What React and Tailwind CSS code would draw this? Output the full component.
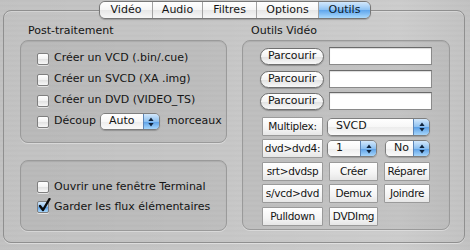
import React from "react";

const metal =
  "bg-[repeating-linear-gradient(0deg,#c2c2c2_0px,#c9c9c9_1px,#c4c4c4_2px,#c8c8c8_3px,#c0c0c0_4px,#c6c6c6_5px)]";

const tabs = [
  { label: "Vidéo", w: "w-[52px]" },
  { label: "Audio", w: "w-[50px]" },
  { label: "Filtres", w: "w-[54px]" },
  { label: "Options", w: "w-[62px]" },
  { label: "Outils", w: "w-[52px]", active: true },
];

const Arrows = () => (
  <svg width="6" height="10" viewBox="0 0 6 10">
    <path d="M3 0.5 L5.6 4 L0.4 4 Z" fill="#10243d" />
    <path d="M3 9.5 L5.6 6 L0.4 6 Z" fill="#10243d" />
  </svg>
);

const Checkbox = ({ checked }) => (
  <div
    className={`relative w-[12px] h-[12px] shrink-0 rounded-[2px] border border-[#7f7f7f] shadow-[0_1px_0_rgba(255,255,255,0.6)] ${
      checked
        ? "bg-[linear-gradient(#d3e8fc,#8dc0f0_50%,#5a9fe6_51%,#a7d6fb)]"
        : "bg-[linear-gradient(#ffffff,#f2f2f2_50%,#e2e2e2_51%,#f7f7f7)]"
    }`}
  >
    {checked && (
      <svg
        className="absolute -top-[4px] left-[0px]"
        width="13"
        height="14"
        viewBox="0 0 13 14"
      >
        <path
          d="M2 8 L5 12 L11.5 1"
          stroke="#0b0b0b"
          strokeWidth="2.4"
          fill="none"
          strokeLinecap="round"
          strokeLinejoin="round"
        />
      </svg>
    )}
  </div>
);

const CheckRow = ({ label, checked, children }) => (
  <div className="flex items-center h-[21px]">
    <Checkbox checked={checked} />
    <span className="ml-[5px] whitespace-nowrap">{label}</span>
    {children}
  </div>
);

const Popup = ({ label, className }) => (
  <div
    className={`flex h-[17px] rounded-[5px] border border-[#7e7e7e] overflow-hidden shadow-[0_1px_1px_rgba(0,0,0,0.2)] ${className}`}
  >
    <div className="flex-1 flex items-center pl-[8px] bg-[linear-gradient(#ffffff,#f7f7f7_50%,#ececec_51%,#fafafa)] whitespace-nowrap">
      {label}
    </div>
    <div className="w-[16px] flex items-center justify-center border-l border-[#5d86b8] bg-[linear-gradient(#d3e8fc,#8dc0f0_50%,#5a9fe6_51%,#a7d6fb)]">
      <Arrows />
    </div>
  </div>
);

const Pill = ({ label }) => (
  <div className="w-[64px] h-[17px] flex items-center justify-center rounded-full border border-[#6f6f6f] bg-[linear-gradient(#ffffff,#f3f3f3_50%,#e1e1e1_51%,#f8f8f8)] shadow-[0_1px_1px_rgba(0,0,0,0.25)] tracking-[-0.1px]">
    {label}
  </div>
);

const Field = () => (
  <div className="w-[103px] h-[18px] bg-white border border-[#8a8a8a] border-t-[#6a6a6a] shadow-[inset_0_1px_1px_rgba(0,0,0,0.15)]" />
);

const Btn = ({ label, className }) => (
  <div
    className={`h-[19px] flex items-center justify-center border border-[#9a9a9a] rounded-[1px] bg-[linear-gradient(#ffffff,#f4f4f4_60%,#e6e6e6)] whitespace-nowrap text-[10.5px] tracking-[-0.3px] ${className}`}
  >
    {label}
  </div>
);

const Group = ({ className, children }) => (
  <div
    className={`rounded-[8px] border border-[#9a9a9a] bg-[rgba(0,0,0,0.045)] shadow-[inset_0_1px_1px_rgba(0,0,0,0.08),0_1px_0_rgba(255,255,255,0.35)] ${className}`}
  >
    {children}
  </div>
);

export default function App() {
  return (
    <div
      className={`w-[470px] h-[250px] overflow-hidden text-[11px] text-[#141414] ${metal}`}
      style={{ fontFamily: '"DejaVu Sans", sans-serif' }}
    >
      <div className="w-[470px] h-[250px] bg-[linear-gradient(90deg,rgba(0,0,0,0.02),rgba(255,255,255,0)_40%,rgba(255,255,255,0.12)_85%,rgba(0,0,0,0.02))]">
        {/* tab bar */}
        <div className="relative z-10 flex justify-center pt-[1px]">
          <div className="flex h-[18px] rounded-[6px] border border-[#777] overflow-hidden shadow-[0_1px_1px_rgba(0,0,0,0.2)]">
            {tabs.map((t, i) => (
              <div
                key={t.label}
                className={`${t.w} flex items-center justify-center ${
                  i > 0 ? "border-l border-[#a2a2a2]" : ""
                } ${
                  t.active
                    ? "bg-[linear-gradient(#d3e8fc,#8ec2f3_50%,#5ea5ec_51%,#aad9fc)] text-[#0d1a2b]"
                    : "bg-[linear-gradient(#ffffff,#f5f5f5_50%,#e6e6e6_51%,#f6f6f6)]"
                }`}
              >
                {t.label}
              </div>
            ))}
          </div>
        </div>

        {/* tab frame */}
        <div className="-mt-[9px] ml-[3px] w-[462px] h-[233px] rounded-[8px] border border-[#8f8f8f] shadow-[inset_0_1px_0_rgba(255,255,255,0.3),0_1px_0_rgba(255,255,255,0.4)] flex pt-[13px] pl-[16px] gap-[15px]">
          {/* left column */}
          <div className="w-[207px] flex flex-col">
            <div className="h-[14px] leading-[14px] pl-[8px] mb-[2px]">
              Post-traitement
            </div>
            <Group className="h-[103px] pt-[7px] pl-[16px]">
              <CheckRow label="Créer un VCD (.bin/.cue)" />
              <CheckRow label="Créer un SVCD (XA .img)" />
              <CheckRow label="Créer un DVD (VIDEO_TS)" />
              <CheckRow label="Découp">
                <Popup label="Auto" className="w-[60px] ml-[4px]" />
                <span className="ml-[7px]">morceaux</span>
              </CheckRow>
            </Group>
            <Group className="mt-[17px] h-[71px] pt-[16px] pl-[16px]">
              <div className="flex items-center h-[20px]">
                <Checkbox />
                <span className="ml-[5px]">Ouvrir une fenêtre Terminal</span>
              </div>
              <div className="flex items-center h-[20px]">
                <Checkbox checked />
                <span className="ml-[5px]">Garder les flux élémentaires</span>
              </div>
            </Group>
          </div>

          {/* right column */}
          <div className="w-[208px] flex flex-col">
            <div className="h-[14px] leading-[14px] pl-[9px] mb-[2px]">
              Outils Vidéo
            </div>
            <Group className="h-[190px] pt-[6px] pl-[17px]">
              <div className="flex items-center gap-[5px]">
                <Pill label="Parcourir" />
                <Field />
              </div>
              <div className="flex items-center gap-[5px] mt-[5px]">
                <Pill label="Parcourir" />
                <Field />
              </div>
              <div className="flex items-center gap-[5px] mt-[4px]">
                <Pill label="Parcourir" />
                <Field />
              </div>

              <div className="ml-[2px] mt-[7px] flex flex-col">
                <div className="flex items-center">
                  <Btn label="Multiplex:" className="w-[61px]" />
                  <Popup label="SVCD" className="w-[103px] ml-[4px] h-[18px]" />
                </div>
                <div className="flex items-center mt-[3px]">
                  <Btn label="dvd>dvd4:" className="w-[61px]" />
                  <Popup label="1" className="w-[50px] ml-[4px]" />
                  <Popup label="No" className="w-[45px] ml-[8px]" />
                </div>
                <div className="flex items-center gap-[6px] mt-[4px]">
                  <Btn label="srt>dvdsp" className="w-[61px]" />
                  <Btn label="Créer" className="w-[49px]" />
                  <Btn label="Réparer" className="w-[46px]" />
                </div>
                <div className="flex items-center gap-[6px] mt-[3px]">
                  <Btn label="s/vcd>dvd" className="w-[61px]" />
                  <Btn label="Demux" className="w-[49px]" />
                  <Btn label="Joindre" className="w-[46px]" />
                </div>
                <div className="flex items-center gap-[6px] mt-[4px]">
                  <Btn label="Pulldown" className="w-[61px]" />
                  <Btn label="DVDImg" className="w-[49px]" />
                </div>
              </div>
            </Group>
          </div>
        </div>
      </div>
    </div>
  );
}
